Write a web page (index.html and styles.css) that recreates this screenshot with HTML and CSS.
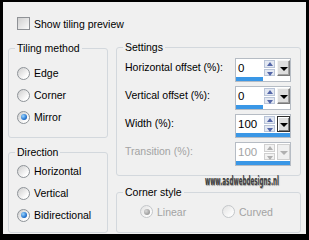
FILE: index.html
```html
<!DOCTYPE html>
<html>
<head>
<meta charset="utf-8">
<link rel="stylesheet" href="styles.css">
</head>
<body>
<div class="dialog">
  <div class="check-row"><span class="checkbox"></span><span>Show tiling preview</span></div>
  <div class="columns">
    <div class="col col-left">
      <fieldset class="group tiling">
        <legend>Tiling method</legend>
        <div class="radio-list">
          <div class="opt"><span class="radio"></span>Edge</div>
          <div class="opt"><span class="radio"></span>Corner</div>
          <div class="opt"><span class="radio on"></span>Mirror</div>
        </div>
      </fieldset>
      <fieldset class="group direction">
        <legend>Direction</legend>
        <div class="radio-list">
          <div class="opt"><span class="radio"></span>Horizontal</div>
          <div class="opt"><span class="radio"></span>Vertical</div>
          <div class="opt"><span class="radio on"></span>Bidirectional</div>
        </div>
      </fieldset>
    </div>
    <div class="col col-right">
      <fieldset class="group settings">
        <legend>Settings</legend>
        <div class="rows">
          <div class="row">
            <span class="label">Horizontal offset (%):</span>
            <div class="spin">
              <span class="value">0</span>
              <span class="arrows"><span class="up"></span><span class="down"></span></span>
              <span class="drop"></span>
              <span class="track"><span class="bar" style="width:50%"></span></span>
            </div>
          </div>
          <div class="row">
            <span class="label">Vertical offset (%):</span>
            <div class="spin">
              <span class="value">0</span>
              <span class="arrows"><span class="up"></span><span class="down"></span></span>
              <span class="drop"></span>
              <span class="track"><span class="bar" style="width:50%"></span></span>
            </div>
          </div>
          <div class="row">
            <span class="label">Width (%):</span>
            <div class="spin">
              <span class="value">100</span>
              <span class="arrows"><span class="up"></span><span class="down"></span></span>
              <span class="drop focus"></span>
              <span class="track"><span class="bar" style="width:100%"></span></span>
            </div>
          </div>
          <div class="row disabled">
            <span class="label">Transition (%):</span>
            <div class="spin">
              <span class="value">100</span>
              <span class="arrows"><span class="up"></span><span class="down"></span></span>
              <span class="drop"></span>
              <span class="track"><span class="bar" style="width:100%"></span></span>
            </div>
          </div>
        </div>
      </fieldset>
      <fieldset class="group corner">
        <legend>Corner style</legend>
        <div class="corner-row">
          <div class="opt dis linear"><span class="radio on"></span>Linear</div>
          <div class="opt dis"><span class="radio"></span>Curved</div>
        </div>
      </fieldset>
    </div>
  </div>
  <div class="watermark">www.asdwebdesigns.nl</div>
</div>
</body>
</html>
```
FILE: styles.css
```css
html { background: #000; }
body {
  margin: 0;
  font-family: "Liberation Sans", Arial, sans-serif;
  font-size: 10.5px;
  color: #000;
}
.dialog {
  position: relative;
  margin: 2px 3px 0 3px;
  height: 232px;
  box-sizing: border-box;
  padding: 15px 0 0 5px;
  background: #f0f0f0;
}
.check-row {
  display: flex;
  align-items: center;
  gap: 4px;
  height: 13px;
  margin-left: 9px;
}
.checkbox {
  width: 13px;
  height: 13px;
  box-sizing: border-box;
  border: 1px solid #8f9296;
  background: linear-gradient(135deg, #cfcfcf, #fbfbfb);
}
.columns {
  display: grid;
  grid-template-columns: 100px 185px;
  column-gap: 8px;
  margin-top: 11px;
}
.col { display: flex; flex-direction: column; }
.col-left { padding-top: 1px; }

.group {
  margin: 0;
  min-width: 0;
  box-sizing: border-box;
  border: 1px solid #d3d8dd;
  border-radius: 3px;
  padding: 0 6px;
}
.group legend {
  padding: 0 2px;
  line-height: 12px;
}
.tiling { height: 96px; padding-top: 8px; }
.direction { height: 87px; margin-top: 8px; padding-top: 2px; }
.settings { height: 135px; padding: 5px 9px 0 6px; }
.corner { height: 47px; margin-top: 10px; padding-top: 7px; }

.radio-list { display: flex; flex-direction: column; }
.opt {
  display: flex;
  align-items: center;
  gap: 4px;
  height: 22px;
  margin-left: 2px;
}
.radio {
  position: relative;
  flex: none;
  width: 13px;
  height: 13px;
  box-sizing: border-box;
  border-radius: 50%;
  border: 1px solid #8e9398;
  background: linear-gradient(135deg, #cdcdcd, #fdfdfd 75%);
}
.radio.on::after {
  content: "";
  position: absolute;
  left: 2.5px;
  top: 2.5px;
  width: 6px;
  height: 6px;
  border-radius: 50%;
  background: radial-gradient(circle at 35% 35%, #9ad6ff, #1f6fcc 65%, #0c3d7e);
}

.rows { display: flex; flex-direction: column; gap: 4px; }
.row {
  display: grid;
  grid-template-columns: 1fr 56px;
  height: 24px;
}
.label {
  padding-left: 2px;
  line-height: 18px;
}
.spin {
  display: grid;
  grid-template-columns: 1fr 12px 14px;
  grid-template-rows: 18px 4px;
  box-sizing: border-box;
  border: 1px solid #b6bcc4;
  background: #fff;
}
.value {
  padding-left: 2px;
  font-size: 11.5px;
  line-height: 18px;
}
.arrows {
  display: flex;
  flex-direction: column;
  gap: 1px;
  padding: 1px 1px 1px 0;
}
.arrows span {
  position: relative;
  flex: 1;
  box-sizing: border-box;
  border: 1px solid #b9c4d8;
  background: #e3e8f2;
}
.arrows span::after {
  content: "";
  position: absolute;
  left: 2px;
  top: 1px;
  border-left: 3px solid transparent;
  border-right: 3px solid transparent;
}
.arrows .up::after { border-bottom: 4px solid #5466a8; }
.arrows .down::after { border-top: 4px solid #5466a8; top: 2px; }
.drop {
  position: relative;
  margin: 1px 0 1px 1px;
  box-sizing: border-box;
  border: 1px solid #7a7a7a;
  border-top-color: #f4f4f4;
  border-left-color: #f4f4f4;
  box-shadow: inset -1px -1px 0 #a0a0a0;
  background: #dedede;
}
.drop.focus {
  border: 1px solid #303030;
  box-shadow: inset 1px 1px 0 #fff, inset -1px -1px 0 #808080;
}
.drop::after {
  content: "";
  position: absolute;
  left: 2px;
  top: 6px;
  border-left: 4px solid transparent;
  border-right: 4px solid transparent;
  border-top: 4px solid #000;
}
.track { grid-column: 1 / -1; background: #fff; }
.bar { display: block; height: 100%; background: #3a97e6; }

.row.disabled .label,
.row.disabled .value { color: #a3a3a3; }
.row.disabled .arrows span { border-color: #d0d0d0; background: #f2f2f2; }
.row.disabled .arrows .up::after { border-bottom-color: #b0b0b0; }
.row.disabled .arrows .down::after { border-top-color: #b0b0b0; }
.row.disabled .drop { border-color: #d0d0d0; box-shadow: none; background: #f0f0f0; }
.row.disabled .drop::after { border-top-color: #b0b0b0; }

.corner-row { display: flex; margin-left: 17px; }
.corner-row .opt { height: 13px; margin-left: 0; }
.corner-row .linear { width: 82px; }
.opt.dis { color: #a3a3a3; }
.opt.dis .radio { border-color: #c4c7ca; background: linear-gradient(135deg, #e2e2e2, #fbfbfb 75%); }
.opt.dis .radio.on::after { background: radial-gradient(circle at 35% 35%, #d8d8d8, #9c9c9c 70%); }

.watermark {
  position: absolute;
  left: 202px;
  top: 172px;
  font-family: "DejaVu Sans Condensed", "DejaVu Sans", sans-serif;
  font-weight: bold;
  font-size: 12px;
  color: #3c3c3c;
  transform: scaleX(0.52);
  transform-origin: left top;
  text-shadow: 1px 1px 1px rgba(0, 0, 0, 0.35);
  white-space: nowrap;
}
```
